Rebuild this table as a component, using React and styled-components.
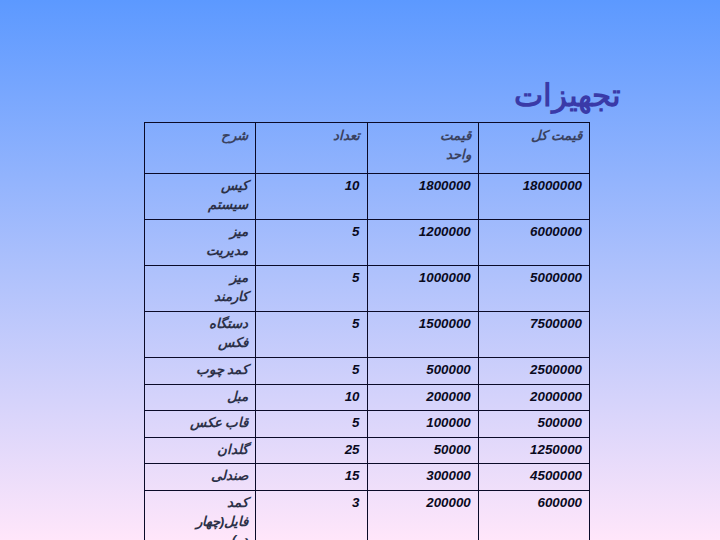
import React from "react";
import styled, { createGlobalStyle } from "styled-components";

const Global = createGlobalStyle`
  html, body { margin: 0; padding: 0; }
  body { font-family: "Liberation Sans", Arial, sans-serif; }
`;

const Slide = styled.div`
  width: 720px;
  height: 540px;
  overflow: hidden;
  background: linear-gradient(to bottom, #5c99ff 0%, #aec1fc 50%, #ffe6fa 100%);
`;

const TitleBar = styled.div`
  display: flex;
  justify-content: flex-end;
  box-sizing: border-box;
  padding: 78px 99px 0 0;
  height: 122px;
`;

const Title = styled.h1`
  margin: 0;
  font-family: "Liberation Sans", Arial, sans-serif;
  font-size: 31px;
  font-weight: bold;
  color: #3a3aa8;
  line-height: 36px;
`;

const TableWrap = styled.div`
  padding-left: 144px;
`;

const Table = styled.table`
  width: 446px;
  border-collapse: collapse;
  table-layout: fixed;
  font-family: "Liberation Sans", Arial, sans-serif;
  font-size: 13.33px;
`;

const Row = styled.tr`
  height: ${(p) => p.$h}px;
`;

const Cell = styled.td`
  border: 1px solid #0a0a28;
  padding: 3px 7px 3px;
  vertical-align: top;
  text-align: right;
  font-weight: bold;
  font-style: italic;
  color: ${(p) => (p.$num ? "#0a0a1e" : "#2c3148")};
  line-height: 18.5px;
`;

const HeadCell = styled(Cell)`
  padding-top: 4px;
  color: #3a4260;
`;

const Lines = ({ lines }) =>
  lines.map((l, i) => (
    <React.Fragment key={i}>
      {i > 0 && <br />}
      {l}
    </React.Fragment>
  ));

const headers = [["شرح"], ["تعداد"], ["قیمت", "واحد"], ["قیمت کل"]];

const rows = [
  [["کیس", "سیستم"], "10", "1800000", "18000000", 46],
  [["میز", "مدیریت"], "5", "1200000", "6000000", 46],
  [["میز", "کارمند"], "5", "1000000", "5000000", 46],
  [["دستگاه", "فکس"], "5", "1500000", "7500000", 46],
  [["کمد چوب"], "5", "500000", "2500000", 27],
  [["مبل"], "10", "200000", "2000000", 26],
  [["قاب عکس"], "5", "100000", "500000", 27],
  [["گلدان"], "25", "50000", "1250000", 26],
  [["صندلی"], "15", "300000", "4500000", 27],
  [["کمد", "فایل(چهار", "در)"], "3", "200000", "600000", 64],
];

export default function App() {
  return (
    <>
      <Global />
      <Slide>
        <TitleBar>
          <Title dir="rtl">تجهیزات</Title>
        </TitleBar>
        <TableWrap>
          <Table>
            <tbody>
              <Row $h={51}>
                {headers.map((h, i) => (
                  <HeadCell key={i} dir="rtl">
                    <Lines lines={h} />
                  </HeadCell>
                ))}
              </Row>
              {rows.map(([name, qty, unit, total, h], i) => (
                <Row key={i} $h={h}>
                  <Cell dir="rtl">
                    <Lines lines={name} />
                  </Cell>
                  <Cell $num dir="rtl">{qty}</Cell>
                  <Cell $num dir="rtl">{unit}</Cell>
                  <Cell $num dir="rtl">{total}</Cell>
                </Row>
              ))}
            </tbody>
          </Table>
        </TableWrap>
      </Slide>
    </>
  );
}
